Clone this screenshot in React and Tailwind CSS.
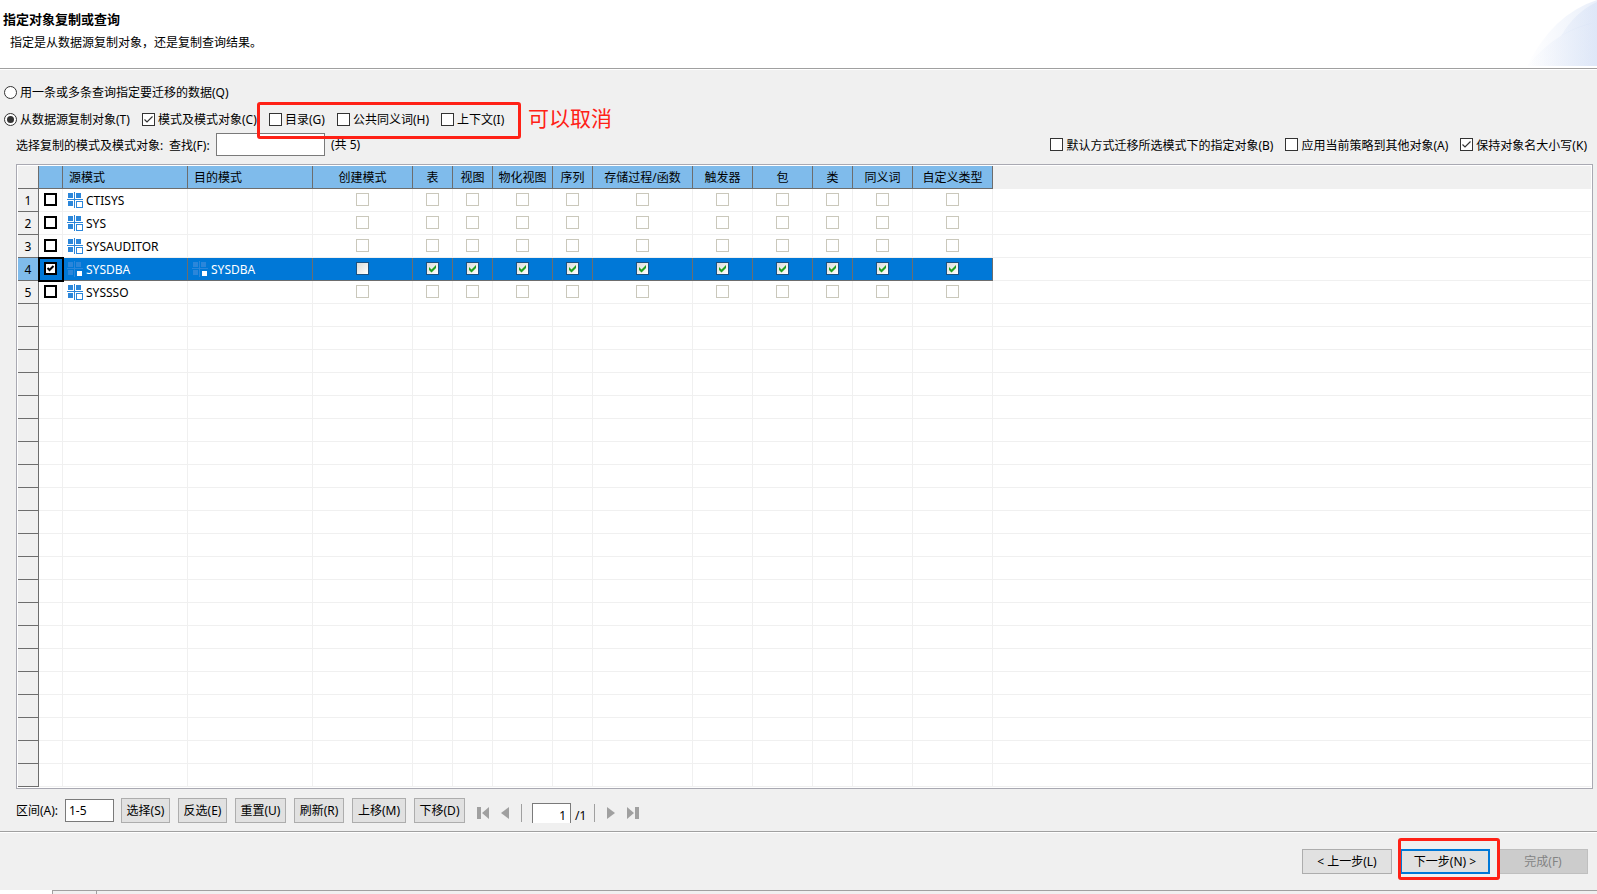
import { useState } from 'react';

const columns = [
  { key: 'create', label: '创建模式' },
  { key: 'table', label: '表' },
  { key: 'view', label: '视图' },
  { key: 'mview', label: '物化视图' },
  { key: 'sequence', label: '序列' },
  { key: 'procedure', label: '存储过程/函数' },
  { key: 'trigger', label: '触发器' },
  { key: 'package', label: '包' },
  { key: 'class', label: '类' },
  { key: 'synonym', label: '同义词' },
  { key: 'type', label: '自定义类型' },
];

const schemas = ['CTISYS', 'SYS', 'SYSAUDITOR', 'SYSDBA', 'SYSSSO'];
const ROW_COUNT = 26;

const toolbarButtons = [
  { label: '选择(S)', width: 'w-[49px]' },
  { label: '反选(E)', width: 'w-[49px]' },
  { label: '重置(U)', width: 'w-[51px]' },
  { label: '刷新(R)', width: 'w-[50px]' },
  { label: '上移(M)', width: 'w-[54px]' },
  { label: '下移(D)', width: 'w-[51px]' },
];

function CheckOption({ label, defaultChecked = false }) {
  return (
    <label className="flex items-center gap-[3px] whitespace-nowrap">
      <span className="grid size-[13px] shrink-0">
        <input
          type="checkbox"
          defaultChecked={defaultChecked}
          className="peer col-start-1 row-start-1 size-[13px] appearance-none border border-[#333333] bg-white"
        />
        <svg viewBox="0 0 13 13" className="pointer-events-none invisible col-start-1 row-start-1 size-[13px] peer-checked:visible">
          <path d="M2.5 6.5 L5 9 L10.5 3.5" fill="none" stroke="#333333" strokeWidth="1.2" />
        </svg>
      </span>
      <span className="pt-0.5">{label}</span>
    </label>
  );
}

function RadioOption({ label, checked, onChange }) {
  return (
    <label className="flex items-center gap-[3px] whitespace-nowrap">
      <span className="grid size-[13px] shrink-0 place-items-center">
        <input
          type="radio"
          name="copyMode"
          checked={checked}
          onChange={onChange}
          className="peer col-start-1 row-start-1 size-[13px] appearance-none rounded-full border border-[#333333] bg-white"
        />
        <span className="pointer-events-none invisible col-start-1 row-start-1 size-[7px] rounded-full bg-[#333333] peer-checked:visible" />
      </span>
      <span className="pt-0.5">{label}</span>
    </label>
  );
}

function RowCheck({ label, checked, onChange }) {
  return (
    <span className="mx-auto grid w-[13px] pb-0.5">
      <input
        type="checkbox"
        aria-label={label}
        checked={checked}
        onChange={onChange}
        className="peer col-start-1 row-start-1 size-[13px] appearance-none border-2 border-black bg-white"
      />
      <svg viewBox="0 0 13 13" className="pointer-events-none invisible col-start-1 row-start-1 size-[13px] peer-checked:visible">
        <path d="M3.5 6 L5.5 8 L9.5 4" fill="none" stroke="#000000" strokeWidth="2" />
      </svg>
    </span>
  );
}

function CellCheck({ label, selected, defaultChecked }) {
  return (
    <span className="mx-auto grid w-[13px] pb-0.5">
      <input
        type="checkbox"
        aria-label={label}
        defaultChecked={defaultChecked}
        disabled={!selected}
        className={
          selected
            ? 'peer col-start-1 row-start-1 size-[13px] appearance-none border border-[#1c5180] bg-linear-to-br from-[#dcdcd7] to-white'
            : 'peer col-start-1 row-start-1 size-[13px] appearance-none border border-[#cac8bb] bg-white'
        }
      />
      <svg viewBox="0 0 13 13" className="pointer-events-none invisible col-start-1 row-start-1 size-[13px] peer-checked:visible">
        <path d="M3 5 L5.5 7.5 L10 3 V6 L5.5 10.5 L3 8 Z" fill="#21a121" />
      </svg>
    </span>
  );
}

function SchemaIcon({ selected }) {
  return (
    <svg viewBox="0 0 16 16" className="size-4 shrink-0" shapeRendering="crispEdges" fill="#2b86da">
      <path d="M1 1h5v5H1zM9 1h5v5H9zM1 9h5v5H1z" />
      <path d="M7 0h1v16H7zM0 7h16v1H0z" />
      {selected ? (
        <path d="M10 10h5v5h-5z" fill="#ffffff" />
      ) : (
        <path d="M9 9h7v7H9zM10 10v5h5v-5z" fillRule="evenodd" />
      )}
    </svg>
  );
}

function SchemaName({ name, selected }) {
  return (
    <span className="flex items-center gap-[3px] pl-1">
      <SchemaIcon selected={selected} />
      <span className="pt-0.5">{name}</span>
    </span>
  );
}

function SchemaTable() {
  const [selectedName, setSelectedName] = useState('SYSDBA');
  const rows = Array.from({ length: ROW_COUNT }, (_, i) => schemas[i] || null);

  return (
    <div className="border border-[#a9a9b2] bg-white p-px">
      <table className="w-full table-fixed border-separate border-spacing-0 leading-4">
        <colgroup>
          <col className="w-[21px]" />
          <col className="w-[24px]" />
          <col className="w-[125px]" />
          <col className="w-[125px]" />
          <col className="w-[100px]" />
          <col className="w-[40px]" />
          <col className="w-[40px]" />
          <col className="w-[60px]" />
          <col className="w-[40px]" />
          <col className="w-[100px]" />
          <col className="w-[60px]" />
          <col className="w-[60px]" />
          <col className="w-[40px]" />
          <col className="w-[60px]" />
          <col className="w-[80px]" />
          <col />
        </colgroup>
        <thead>
          <tr className="h-[23px] bg-[#7fbbeb] [&>*]:border-r [&>*]:border-b [&>*]:border-[#6d6d6d] [&>*]:p-0 [&>*]:pt-0.5 [&>*]:font-normal">
            <td className="bg-[#f0f0f0]"></td>
            <td></td>
            <th scope="col"><span className="block pl-1.5 text-left">源模式</span></th>
            <th scope="col"><span className="block pl-1.5 text-left">目的模式</span></th>
            {columns.map((col) => (
              <th key={col.key} scope="col" className="whitespace-nowrap">{col.label}</th>
            ))}
            <td className="border-none! bg-[#f0f0f0]"></td>
          </tr>
        </thead>
        <tbody>
          {rows.map((name, i) => {
            const selected = name !== null && name === selectedName;
            return (
              <tr
                key={i}
                className={
                  selected
                    ? 'h-[23px] bg-[#0078d7] text-white [&>td]:border-r [&>td]:border-b [&>td]:border-[#6d6d6d] [&>td]:p-0'
                    : 'h-[23px] [&>td]:border-r [&>td]:border-b [&>td]:border-[#f0f0f0] [&>td]:p-0'
                }
              >
                <th
                  scope="row"
                  className={
                    selected
                      ? 'border-r border-b border-[#6d6d6d] bg-[#7fbbeb] p-0 pt-0.5 font-normal text-black'
                      : 'border-r border-b border-[#6d6d6d] bg-[#f0f0f0] p-0 pt-0.5 font-normal'
                  }
                >
                  {name && i + 1}
                </th>
                <td className={selected ? 'outline-2 -outline-offset-1 outline-black' : ''}>
                  {name && (
                    <RowCheck
                      label={name}
                      checked={selected}
                      onChange={() => setSelectedName(selected ? '' : name)}
                    />
                  )}
                </td>
                <td>{name && <SchemaName name={name} selected={selected} />}</td>
                <td>{selected && <SchemaName name={name} selected />}</td>
                {columns.map((col) => (
                  <td key={col.key}>
                    {name && (
                      <CellCheck
                        key={String(selected)}
                        label={`${name} ${col.label}`}
                        selected={selected}
                        defaultChecked={selected && col.key !== 'create'}
                      />
                    )}
                  </td>
                ))}
                <td className="border-r-0! border-[#f0f0f0]! bg-white"></td>
              </tr>
            );
          })}
        </tbody>
      </table>
    </div>
  );
}

function Pager() {
  return (
    <div className="flex items-center pt-1 text-[#a0a0a0]">
      <button type="button" aria-label="首页" className="ml-3 w-3">
        <svg viewBox="0 0 12 12" className="size-3" fill="currentColor">
          <path d="M0 0h4v12H0zM12 0v12L5 6z" />
        </svg>
      </button>
      <button type="button" aria-label="上一页" className="ml-3 w-2">
        <svg viewBox="0 0 8 12" className="h-3 w-2" fill="currentColor">
          <path d="M8 0v12L0 6z" />
        </svg>
      </button>
      <span className="ml-3 h-[18px] w-px bg-[#a0a0a0]" />
      <input
        type="text"
        aria-label="页码"
        defaultValue="1"
        className="ml-2.5 h-5 w-[39px] border border-b-0 border-[#7a7a7a] bg-white px-1 pt-1 text-right text-black"
      />
      <span className="ml-1 pt-1.5 text-black">/1</span>
      <span className="ml-2 h-[18px] w-px bg-[#a0a0a0]" />
      <button type="button" aria-label="下一页" className="ml-3 w-2">
        <svg viewBox="0 0 8 12" className="h-3 w-2" fill="currentColor">
          <path d="M0 0v12L8 6z" />
        </svg>
      </button>
      <button type="button" aria-label="末页" className="ml-3 w-3">
        <svg viewBox="0 0 12 12" className="size-3" fill="currentColor">
          <path d="M8 0h4v12H8zM0 0v12L7 6z" />
        </svg>
      </button>
    </div>
  );
}

export default function App() {
  const [mode, setMode] = useState('copy');

  return (
    <div className="min-h-screen bg-[#f0f0f0] font-['Noto_Sans','Noto_Sans_CJK_SC',sans-serif] text-xs text-black">
      <header className="flex h-[69px] justify-between border-b border-[#a0a0a0] bg-white">
        <div className="pt-[11px] pl-[3px]">
          <h1 className="text-[13px] leading-4 font-bold">指定对象复制或查询</h1>
          <p className="mt-2 pl-[7px] leading-4">指定是从数据源复制对象，还是复制查询结果。</p>
        </div>
        <svg viewBox="0 0 72 66" className="h-[66px] w-[72px]">
          <defs>
            <linearGradient id="fade" gradientUnits="userSpaceOnUse" x1="0" x2="72" y1="0" y2="0">
              <stop offset="0" stopColor="#dbe4f6" stopOpacity="0" />
              <stop offset="1" stopColor="#d3dff5" stopOpacity="0.5" />
            </linearGradient>
          </defs>
          <path d="M2 66 Q28 14 72 0 V66 Z" fill="url(#fade)" />
          <path d="M36 36 Q50 12 72 2 V22 Q54 26 36 36 Z" fill="url(#fade)" />
          <path d="M2 66 Q34 28 72 22 V66 Z" fill="url(#fade)" />
        </svg>
      </header>

      <main className="border-t border-white pt-3.5">
        <div className="flex h-4 items-center pl-1">
          <RadioOption
            label="用一条或多条查询指定要迁移的数据(Q)"
            checked={mode === 'query'}
            onChange={() => setMode('query')}
          />
        </div>
        <div className="mt-[11px] flex h-4 items-center pl-1">
          <div className="w-[138px]">
            <RadioOption
              label="从数据源复制对象(T)"
              checked={mode === 'copy'}
              onChange={() => setMode('copy')}
            />
          </div>
          <div className="w-[127px]">
            <CheckOption label="模式及模式对象(C)" defaultChecked />
          </div>
          <div className="relative flex h-4 items-center">
            <div className="w-[68px]">
              <CheckOption label="目录(G)" />
            </div>
            <div className="w-[104px]">
              <CheckOption label="公共同义词(H)" />
            </div>
            <div className="w-[68px]">
              <CheckOption label="上下文(I)" />
            </div>
            <div className="pointer-events-none absolute -inset-x-3 -top-[9px] -bottom-3 rounded-[3px] border-3 border-[#ff2116]" />
          </div>
          <span className="ml-[19px] pb-0.5 text-[21px] leading-4 text-[#ff2116]">可以取消</span>
        </div>
        <div className="mt-1.5 flex h-[23px] items-center pr-2.5 pl-4">
          <span className="w-[153px] pt-0.5 whitespace-nowrap">选择复制的模式及模式对象:</span>
          <label htmlFor="search" className="w-[47px] pt-0.5 whitespace-nowrap">查找(F):</label>
          <input id="search" type="text" className="h-[23px] w-[109px] border border-[#7a7a7a] bg-white px-1" />
          <span className="ml-1.5">(共 5)</span>
          <div className="ml-auto flex gap-3">
            <CheckOption label="默认方式迁移所选模式下的指定对象(B)" />
            <CheckOption label="应用当前策略到其他对象(A)" />
            <CheckOption label="保持对象名大小写(K)" defaultChecked />
          </div>
        </div>

        <div className="mt-2 pr-1 pl-4">
          <SchemaTable />
        </div>

        <div className="mt-[9px] flex h-[25px] items-center pl-4">
          <label htmlFor="range" className="w-[49px] whitespace-nowrap">区间(A):</label>
          <input id="range" type="text" defaultValue="1-5" className="mr-[7px] h-[23px] w-[49px] border border-[#7a7a7a] bg-white px-[3px]" />
          <div className="flex gap-2">
            {toolbarButtons.map((btn) => (
              <button
                key={btn.label}
                type="button"
                className={`${btn.width} h-[25px] border border-[#adadad] bg-[#e1e1e1] whitespace-nowrap`}
              >
                {btn.label}
              </button>
            ))}
          </div>
          <Pager />
        </div>
      </main>

      <footer className="mt-2 border-t border-[#a0a0a0]">
        <div className="flex justify-end gap-2 border-t border-white pt-4 pr-[9px] pb-4">
          <button type="button" className="h-[25px] w-[90px] border border-[#adadad] bg-[#e1e1e1]">
            &lt; 上一步(L)
          </button>
          <button type="button" disabled className="order-last h-[25px] w-[90px] border border-[#bfbfbf] bg-[#cccccc] text-[#838383]">
            完成(F)
          </button>
          <div className="relative">
            <button type="button" className="h-[25px] w-[90px] border-2 border-[#0078d7] bg-[#e1e1e1]">
              下一步(N) &gt;
            </button>
            <div className="pointer-events-none absolute -top-[11px] -right-2.5 -bottom-1.5 -left-0.5 rounded-[3px] border-3 border-[#ff2116]" />
          </div>
        </div>
        <div className="flex h-1">
          <div className="w-[52px] bg-white" />
          <div className="w-[45px] border border-b-0 border-[#a0a0a0]" />
          <div className="flex-1 border-t border-[#a0a0a0]" />
        </div>
      </footer>
    </div>
  );
}
